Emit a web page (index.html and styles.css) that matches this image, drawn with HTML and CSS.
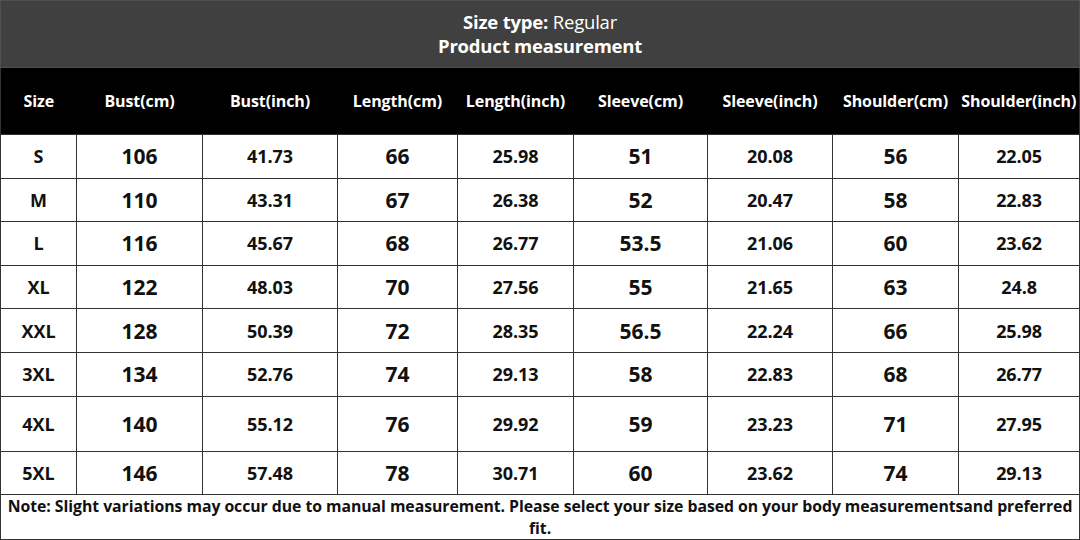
FILE: index.html
```html
<!DOCTYPE html>
<html>
<head>
<meta charset="utf-8">
<link rel="stylesheet" href="styles.css">
</head>
<body>
<table class="chart">
  <colgroup>
    <col class="c1"><col class="c2"><col class="c3"><col class="c4"><col class="c5"><col class="c6"><col class="c7"><col class="c8"><col class="c9">
  </colgroup>
  <tr class="title-row">
    <td colspan="9"><b>Size type:</b> Regular<br><b>Product measurement</b></td>
  </tr>
  <tr class="head-row">
    <th>Size</th><th>Bust(cm)</th><th>Bust(inch)</th><th>Length(cm)</th><th>Length(inch)</th><th>Sleeve(cm)</th><th>Sleeve(inch)</th><th>Shoulder(cm)</th><th>Shoulder(inch)</th>
  </tr>
  <tr class="row"><td class="sz">S</td><td class="big">106</td><td>41.73</td><td class="big">66</td><td>25.98</td><td class="big">51</td><td>20.08</td><td class="big">56</td><td>22.05</td></tr>
  <tr class="row"><td class="sz">M</td><td class="big">110</td><td>43.31</td><td class="big">67</td><td>26.38</td><td class="big">52</td><td>20.47</td><td class="big">58</td><td>22.83</td></tr>
  <tr class="row"><td class="sz">L</td><td class="big">116</td><td>45.67</td><td class="big">68</td><td>26.77</td><td class="big">53.5</td><td>21.06</td><td class="big">60</td><td>23.62</td></tr>
  <tr class="row"><td class="sz">XL</td><td class="big">122</td><td>48.03</td><td class="big">70</td><td>27.56</td><td class="big">55</td><td>21.65</td><td class="big">63</td><td>24.8</td></tr>
  <tr class="row"><td class="sz">XXL</td><td class="big">128</td><td>50.39</td><td class="big">72</td><td>28.35</td><td class="big">56.5</td><td>22.24</td><td class="big">66</td><td>25.98</td></tr>
  <tr class="row"><td class="sz">3XL</td><td class="big">134</td><td>52.76</td><td class="big">74</td><td>29.13</td><td class="big">58</td><td>22.83</td><td class="big">68</td><td>26.77</td></tr>
  <tr class="row tall"><td class="sz">4XL</td><td class="big">140</td><td>55.12</td><td class="big">76</td><td>29.92</td><td class="big">59</td><td>23.23</td><td class="big">71</td><td>27.95</td></tr>
  <tr class="row"><td class="sz">5XL</td><td class="big">146</td><td>57.48</td><td class="big">78</td><td>30.71</td><td class="big">60</td><td>23.62</td><td class="big">74</td><td>29.13</td></tr>
  <tr class="note-row">
    <td colspan="9">Note: Slight variations may occur due to manual measurement. Please select your size based on your body measurementsand preferred fit.</td>
  </tr>
</table>
</body>
</html>
```

FILE: styles.css
```css
html, body {
  margin: 0;
  padding: 0;
  background: #ffffff;
}

.chart {
  width: 1079px;
  border-collapse: collapse;
  table-layout: fixed;
  font-family: "Open Sans", "Noto Sans", sans-serif;
  font-weight: 700;
  color: #111;
  text-align: center;
}

.c1 { width: 76px; }
.c2 { width: 126px; }
.c3 { width: 135px; }
.c4 { width: 120px; }
.c5 { width: 116px; }
.c6 { width: 134px; }
.c7 { width: 125px; }
.c8 { width: 126px; }
.c9 { width: 121px; }

.chart td, .chart th {
  border: 1px solid #333333;
  padding: 0;
}

.title-row td {
  background: #404040;
  color: #ffffff;
  height: 66px;
  font-size: 18.5px;
  line-height: 24px;
  font-weight: 400;
  letter-spacing: -0.2px;
  border-color: #505050;
}

.title-row b {
  font-weight: 700;
}

.head-row th {
  background: #000000;
  color: #ffffff;
  height: 66px;
  font-size: 16px;
  letter-spacing: -0.1px;
  border-left: none;
  border-right: none;
  white-space: nowrap;
  padding-top: 0;
}

.head-row th:first-child {
  border-left: 1px solid #333333;
}

.head-row th:last-child {
  border-right: 1px solid #333333;
}

.row td {
  height: 42.6px;
  font-size: 18px;
  letter-spacing: -0.1px;
}

.row.tall td {
  height: 54px;
}

.row td.big {
  font-size: 21px;
  letter-spacing: 0;
}

.row td.sz {
  font-size: 18px;
  letter-spacing: 0;
}

.note-row td {
  height: 42px;
  font-size: 15.8px;
  line-height: 22px;
  letter-spacing: -0.05px;
  vertical-align: top;
  padding: 0 3px;
}
```
